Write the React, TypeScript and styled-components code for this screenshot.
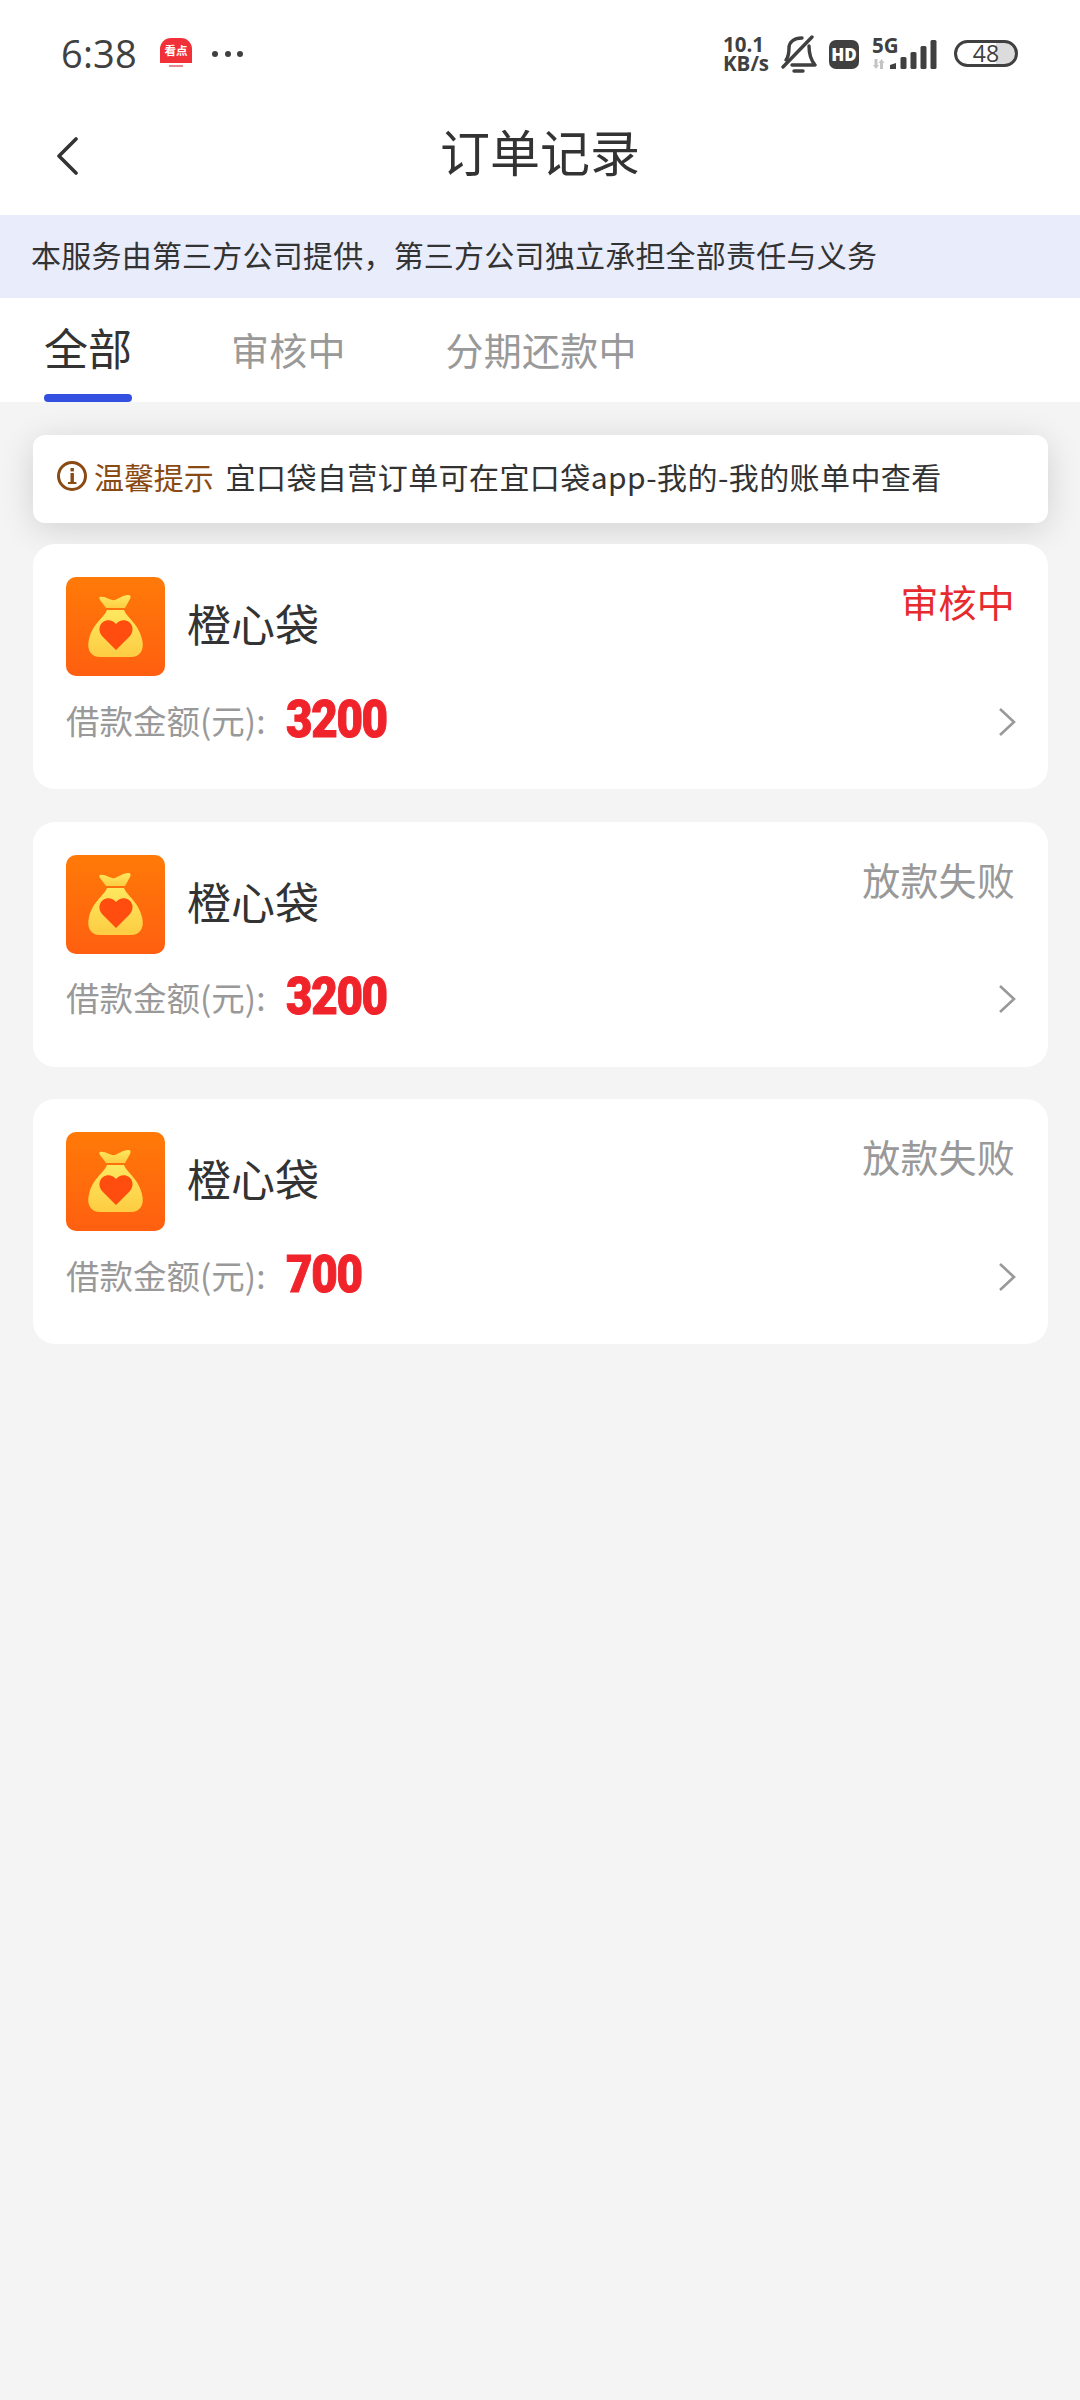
import React from "react";
import styled, { createGlobalStyle } from "styled-components";

const Global = createGlobalStyle`
  html, body { margin: 0; padding: 0; background: #f4f4f5; }
  * { box-sizing: border-box; }
`;

const CJK = `"Noto Sans CJK SC", "Noto Sans", sans-serif`;

const Page = styled.div`
  width: 1080px;
  height: 2400px;
  background: #f4f4f5;
  font-family: ${CJK};
  color: #333;
  overflow: hidden;
`;
const StatusBar = styled.div`
  height: 100px;
  background: #fff;
  display: flex;
  align-items: flex-start;
  justify-content: space-between;
  padding: 32px 62px 0 61px;
`;
const StatusLeft = styled.div`
  display: flex;
  align-items: flex-start;
  height: 44px;
`;
const Time = styled.span`
  font-family: "Open Sans", sans-serif;
  font-weight: 500;
  font-size: 38px;
  line-height: 44px;
  letter-spacing: 0.2px;
  color: #404040;
  width: 99px;
  margin-top: -1px;
`;
const NewsBadge = styled.div`
  width: 32px;
  height: 32px;
  display: flex;
  flex-direction: column;
  align-items: center;
  background: linear-gradient(#f1303a 0 25px, #fff 25px);
  border-radius: 11px 11px 0 0;
  margin-top: 6px;
`;
const NewsText = styled.span`
  font-size: 11.5px;
  line-height: 24px;
  font-weight: 700;
  color: #fff;
`;
const NewsSub = styled.span`
  width: 14px;
  height: 2px;
  margin-top: 3px;
  background: #e58a90;
`;
const Dots = styled.div`
  display: flex;
  gap: 6.5px;
  margin: 19px 0 0 20px;
`;
const Dot = styled.span`
  width: 6px;
  height: 6px;
  border-radius: 50%;
  background: #404040;
`;
const StatusRight = styled.div`
  display: flex;
  align-items: flex-start;
  color: #404040;
  height: 44px;
`;
const Speed = styled.div`
  font-family: "Open Sans", sans-serif;
  font-weight: 700;
  font-size: 20.5px;
  line-height: 19px;
  width: 58px;
  margin-top: 3px;
  display: flex;
  flex-direction: column;
`;
const BellSvg = styled.svg`
  width: 36px;
  height: 40px;
  margin-top: 2px;
`;
const HdBadge = styled.div`
  width: 30px;
  height: 29px;
  margin: 8px 0 0 12px;
  border-radius: 7px;
  background: #404040;
  color: #fff;
  font-family: "Open Sans", sans-serif;
  font-weight: 800;
  font-size: 17px;
  line-height: 29px;
  text-align: center;
`;
const Network = styled.div`
  position: relative;
  width: 66px;
  height: 44px;
  margin: 0 0 0 13px;
`;
const FiveG = styled.span`
  position: absolute;
  left: 0;
  top: 1px;
  font-family: "Open Sans", sans-serif;
  font-weight: 700;
  font-size: 20.5px;
  line-height: 24px;
`;
const NetSvg = styled.svg`
  position: absolute;
  left: 0;
  top: 0;
  width: 66px;
  height: 44px;
`;
const Battery = styled.div`
  width: 64px;
  height: 27px;
  margin: 8px 0 0 16px;
  border: 3px solid #404040;
  border-radius: 14px;
  background: linear-gradient(90deg, #fff 0 68%, #dcdcdc 68%);
  font-family: "Open Sans", sans-serif;
  font-size: 23px;
  line-height: 20px;
  text-align: center;
  color: #404040;
`;
const Header = styled.header`
  height: 115px;
  background: #fff;
  display: flex;
  align-items: center;
  justify-content: center;
  position: relative;
  padding-bottom: 15px;
`;
const BackIcon = styled.svg`
  position: absolute;
  left: 56px;
  top: 37px;
  width: 24px;
  height: 40px;
`;
const Title = styled.h1`
  margin: 0;
  font-size: 50px;
  line-height: 70px;
  font-weight: 400;
  color: #333;
`;
const Banner = styled.div`
  height: 83px;
  background: #e9ecfb;
  font-size: 30px;
  letter-spacing: 0.22px;
  line-height: 78px;
  padding-left: 31px;
  color: #333;
`;
const Tabs = styled.nav`
  height: 104px;
  background: #fff;
  display: flex;
  align-items: flex-start;
  padding-left: 44px;
`;
const Tab = styled.div<{ $active?: boolean; $gap: number }>`
  position: relative;
  height: 104px;
  margin-right: ${(p) => p.$gap}px;
  padding-top: ${(p) => (p.$active ? 19 : 21)}px;
  font-size: ${(p) => (p.$active ? 44 : 38)}px;
  letter-spacing: ${(p) => (p.$active ? 0 : 0.2)}px;
  line-height: 60px;
  color: ${(p) => (p.$active ? "#333" : "#999")};
  ${(p) =>
    p.$active &&
    `&::after {
      content: "";
      position: absolute;
      left: 0;
      right: 0;
      bottom: 0;
      height: 8px;
      border-radius: 4px;
      background: #3450e0;
    }`}
`;
const Content = styled.main`
  padding: 33px 32px 0 33px;
  display: flex;
  flex-direction: column;
`;
const Notice = styled.div`
  height: 88px;
  margin-bottom: 21px;
  display: flex;
  align-items: center;
  padding: 0 0 6px 23px;
  background: #fff;
  border-radius: 12px;
  box-shadow: 0 6px 34px rgba(0, 0, 0, 0.14);
  font-size: 30px;
  position: relative;
`;
const InfoIcon = styled.svg`
  width: 32px;
  height: 32px;
  margin-right: 6px;
  flex: none;
`;
const NoticeLabel = styled.span`
  color: #8a4a14;
  margin-right: 12px;
  letter-spacing: -0.1px;
`;
const NoticeText = styled.span`
  color: #333;
  letter-spacing: 0.42px;
`;
const Card = styled.article`
  height: 245px;
  margin-bottom: 32.5px;
  padding: 33px 33px 0;
  background: #fff;
  border-radius: 22px;
  position: relative;
  display: flex;
  flex-direction: column;
`;
const TopRow = styled.div`
  display: flex;
  align-items: flex-start;
  height: 99px;
`;
const Logo = styled.svg`
  width: 99px;
  height: 99px;
  flex: none;
`;
const Name = styled.span`
  font-size: 44px;
  line-height: 60px;
  margin: 16px 0 0 22px;
  color: #333;
`;
const Status = styled.span<{ $red?: boolean }>`
  margin-left: auto;
  margin-top: -4px;
  font-size: 38px;
  letter-spacing: 0.2px;
  line-height: 56px;
  color: ${(p) => (p.$red ? "#e62a2e" : "#999")};
`;
const BottomRow = styled.div`
  display: flex;
  align-items: center;
  height: 60px;
  margin-top: 13px;
`;
const Label = styled.span`
  font-size: 33.5px;
  color: #999;
  width: 220px;
`;
const Amount = styled.span`
  display: inline-block;
  transform: scaleX(0.88);
  transform-origin: left center;
  font-family: Roboto, "Liberation Sans", sans-serif;
  font-weight: 900;
  font-size: 52px;
  letter-spacing: -1.5px;
  color: #f0232b;
  -webkit-text-stroke: 1px #f0232b;
`;
const Chevron = styled.svg`
  margin: 5px -1px 0 auto;
  width: 18px;
  height: 30px;
`;

const MoneyBag = ({ id }: { id: string }) => (
  <Logo viewBox="0 0 99 99">
    <defs>
      <linearGradient id={`bg${id}`} x1="0" y1="0" x2="0" y2="1">
        <stop offset="0" stopColor="#ff7a08" />
        <stop offset="1" stopColor="#ff5f10" />
      </linearGradient>
      <linearGradient id={`bag${id}`} x1="0" y1="0" x2="0" y2="1">
        <stop offset="0" stopColor="#fee860" />
        <stop offset="1" stopColor="#fdcc42" />
      </linearGradient>
    </defs>
    <rect width="99" height="99" rx="10" fill={`url(#bg${id})`} />
    <path
      d="M34 20C40 19 44 24 49 23C52 22 57 18 62 18C65 18 65 20 64 22L59 31H40L34 23C33 21 33 20 34 20z"
      fill={`url(#bag${id})`}
    />
    <path
      d="M41 33H58C62 42 72 46 76 62C79 74 73 80 65 80H34C26 80 20 74 23 62C27 46 37 42 41 33z"
      fill={`url(#bag${id})`}
    />
    <path
      d="M50 73L36 59C32 54 33 48 37 45C41 42 47 43 50 47C53 43 59 42 63 45C67 48 68 54 64 59z"
      fill="#ff4d0f"
    />
  </Logo>
);

const orders = [
  { id: "a", amount: "3200", status: "审核中", red: true },
  { id: "b", amount: "3200", status: "放款失败", red: false },
  { id: "c", amount: "700", status: "放款失败", red: false },
];

export default function App() {
  return (
    <Page>
      <Global />
      <StatusBar>
        <StatusLeft>
          <Time>6:38</Time>
          <NewsBadge>
            <NewsText>看点</NewsText>
            <NewsSub />
          </NewsBadge>
          <Dots>
            <Dot />
            <Dot />
            <Dot />
          </Dots>
        </StatusLeft>
        <StatusRight>
          <Speed>
            <span>10.1</span>
            <span>KB/s</span>
          </Speed>
          <BellSvg viewBox="0 0 36 40" fill="none" stroke="#404040" strokeWidth="3.4" strokeLinecap="round" strokeLinejoin="round">
            <path d="M5 26C8 22 8 18 8 14C8 8 13 4 21 4" />
            <path d="M28 12C28 18 29 25 34 31H11" />
            <path d="M2 33 31 3" />
            <path d="M13 37h9" />
          </BellSvg>
          <HdBadge>HD</HdBadge>
          <Network>
            <FiveG>5G</FiveG>
            <NetSvg viewBox="0 0 66 44">
              <g fill="#c4c4c4">
                <path d="M1 33h1.5v-6h3v6H7l-3 4z" />
                <path d="M8 31h-1.5l3-4 3 4H11v6H8z" />
              </g>
              <g fill="#404040">
                <path d="M18 33l6-2v6h-6z" />
                <rect x="28.5" y="25" width="6" height="12" rx="1.5" />
                <rect x="38.5" y="20" width="6" height="17" rx="1.5" />
                <rect x="48.5" y="14" width="6" height="23" rx="1.5" />
                <rect x="58.5" y="8" width="6" height="29" rx="1.5" />
              </g>
            </NetSvg>
          </Network>
          <Battery>48</Battery>
        </StatusRight>
      </StatusBar>
      <Header>
        <BackIcon viewBox="0 0 24 40" fill="none" stroke="#333" strokeWidth="3.6" strokeLinecap="round" strokeLinejoin="round">
          <path d="M20 2 3 19l17 17" />
        </BackIcon>
        <Title>订单记录</Title>
      </Header>
      <Banner>本服务由第三方公司提供，第三方公司独立承担全部责任与义务</Banner>
      <Tabs>
        <Tab $active $gap={99}>全部</Tab>
        <Tab $gap={100}>审核中</Tab>
        <Tab $gap={0}>分期还款中</Tab>
      </Tabs>
      <Content>
        <Notice>
          <InfoIcon viewBox="0 0 32 32" fill="none">
            <circle cx="16" cy="16" r="13.5" stroke="#8a4a14" strokeWidth="3" />
            <rect x="14.5" y="13" width="3.4" height="10" fill="#8a4a14" />
            <rect x="14.5" y="8" width="3.4" height="3.4" fill="#8a4a14" />
            <rect x="12" y="22" width="8.4" height="2" fill="#8a4a14" />
          </InfoIcon>
          <NoticeLabel>温馨提示</NoticeLabel>
          <NoticeText>宜口袋自营订单可在宜口袋app-我的-我的账单中查看</NoticeText>
        </Notice>
        {orders.map((o) => (
          <Card key={o.id}>
            <TopRow>
              <MoneyBag id={o.id} />
              <Name>橙心袋</Name>
              <Status $red={o.red}>{o.status}</Status>
            </TopRow>
            <BottomRow>
              <Label>借款金额(元):</Label>
              <Amount>{o.amount}</Amount>
              <Chevron viewBox="0 0 18 30" fill="none" stroke="#999" strokeWidth="2.6">
                <path d="M2 2l14 13L2 28" />
              </Chevron>
            </BottomRow>
          </Card>
        ))}
      </Content>
    </Page>
  );
}
